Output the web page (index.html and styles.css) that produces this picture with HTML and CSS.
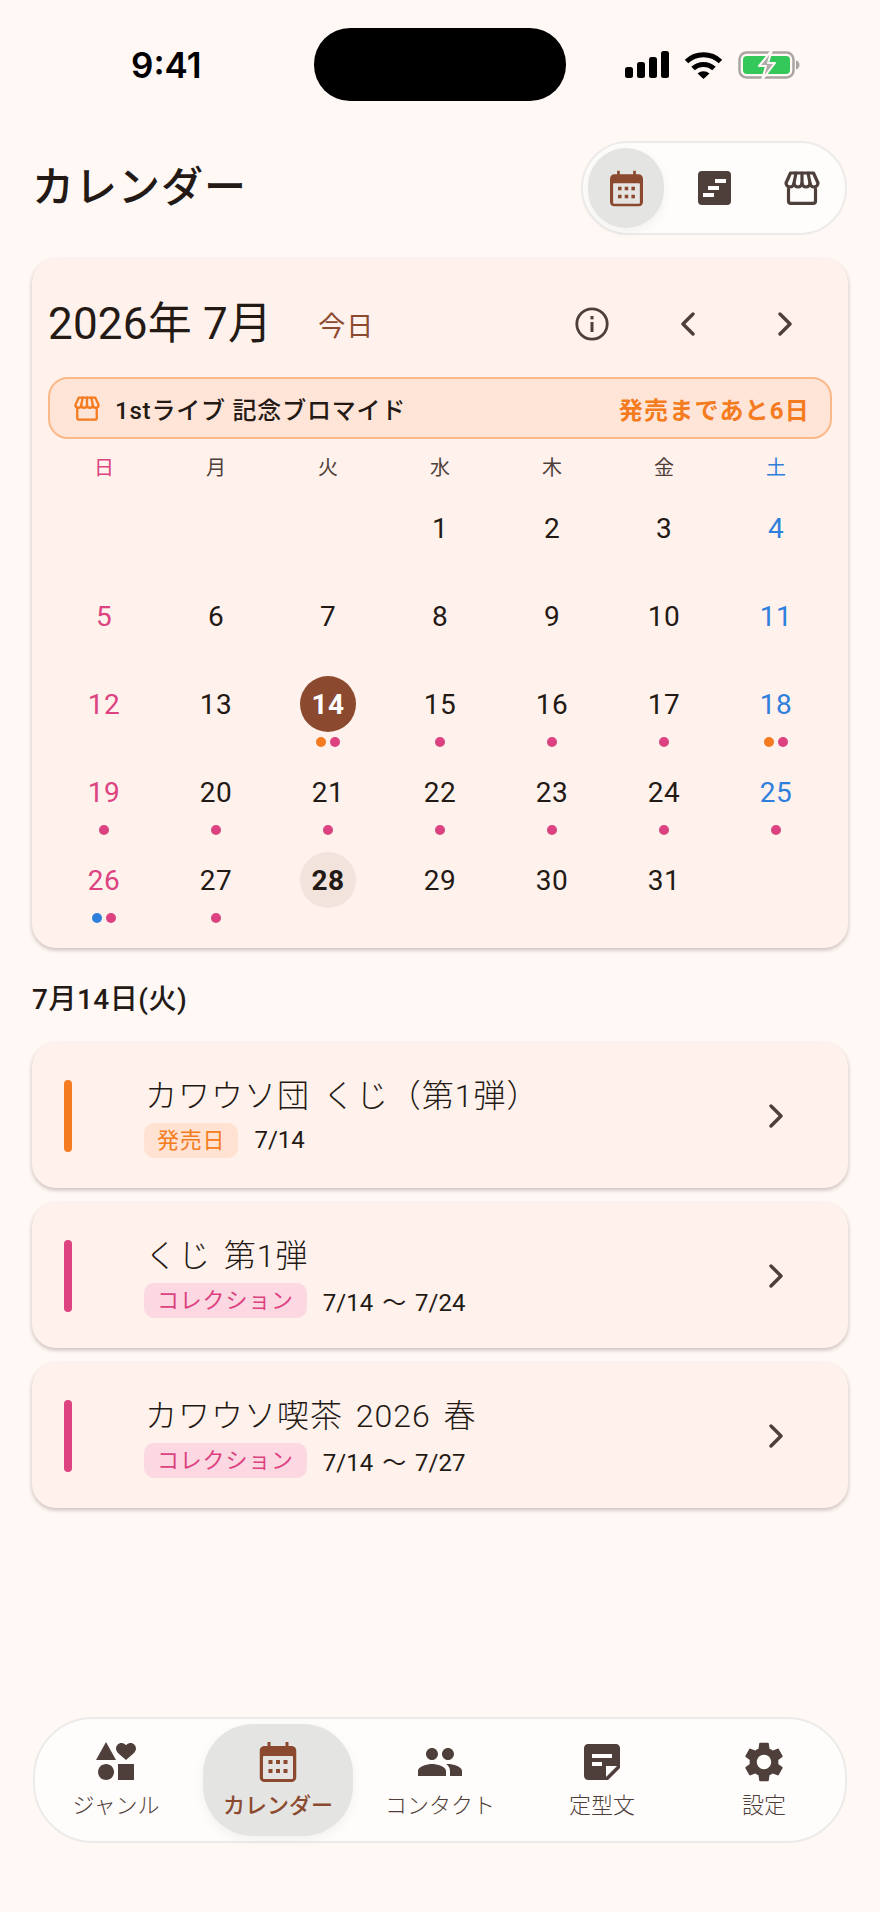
FILE: index.html
```html
<!DOCTYPE html>
<html lang="ja">
<head>
  <meta charset="UTF-8" />
  <meta name="viewport" content="width=device-width, initial-scale=1.0" />
  <title>カレンダー</title>
  <link rel="stylesheet" href="styles.css">
</head>
<body>
  <svg class="defs" width="0" height="0">
    <symbol id="cal" viewBox="0 0 37 40">
      <path fill="currentColor" d="M8 0h3v4h15V0h3v4h3c2.800 0 5 2.200 5 5v26c0 2.800-2.200 5-5 5H5c-2.800 0-5-2.200-5-5V9c0-2.800 2.200-5 5-5h3z"/>
      <rect x="3.500" y="14" width="30" height="23" rx="1" fill="#e6e4e2"/>
      <g fill="currentColor">
        <rect x="9" y="18" width="4" height="4"/><rect x="16.500" y="18" width="4" height="4"/><rect x="24" y="18" width="4" height="4"/>
        <rect x="9" y="27" width="4" height="4"/><rect x="16.500" y="27" width="4" height="4"/><rect x="24" y="27" width="4" height="4"/>
      </g>
    </symbol>
    <symbol id="store" viewBox="0 0 36 34">
      <g fill="none" stroke="currentColor" stroke-width="3.200" stroke-linejoin="round" stroke-linecap="round">
        <path d="M6.500 2h23L34 12a4 4 0 0 1-8 0 4 4 0 0 1-8 0 4 4 0 0 1-8 0 4 4 0 0 1-8 0z"/>
        <path d="M12 2l-2 10M18 2v10M24 2l2 10"/>
        <path d="M4.500 18v12c0 1.500.8 2.300 2.300 2.300h22.400c1.500 0 2.300-.8 2.300-2.300V18"/>
      </g>
    </symbol>
    <symbol id="chev-right" viewBox="0 0 16 24">
      <path d="M3 2l10 10-10 10" fill="none" stroke="currentColor" stroke-width="3.400" stroke-linecap="round" stroke-linejoin="round"/>
    </symbol>
    <symbol id="chev-left" viewBox="0 0 16 24">
      <path d="M13 2L3 12l10 10" fill="none" stroke="currentColor" stroke-width="3.400" stroke-linecap="round" stroke-linejoin="round"/>
    </symbol>
  </svg>

  <div class="page">
    <div class="status-bar">
      <div class="time">9:41</div>
      <div class="island"></div>
      <div class="status-icons">
        <svg width="44" height="27" viewBox="0 0 44 27">
          <rect x="0" y="16" width="8" height="11" rx="2.500"/>
          <rect x="12" y="11" width="8" height="16" rx="2.500"/>
          <rect x="24" y="6" width="8" height="21" rx="2.500"/>
          <rect x="36" y="0" width="8" height="27" rx="2.500"/>
        </svg>
        <svg width="39" height="28" viewBox="0 0 39 28">
          <path d="M2.500 10.500A25 25 0 0 1 36.500 10.500M9 17.500A15.500 15.500 0 0 1 30 17.500" fill="none" stroke="#000" stroke-width="5"/>
          <path d="M13.500 22.500A9 9 0 0 1 25.500 22.500L19.500 28z"/>
        </svg>
        <svg class="battery" width="62" height="28" viewBox="0 0 62 28">
          <rect x="1.500" y="1.500" width="54" height="25" rx="7" fill="none" stroke="#a8a5a2" stroke-width="2.500"/>
          <path d="M58 9.500c2 .5 3.500 2.300 3.500 4.500s-1.500 4-3.500 4.500z" fill="#a8a5a2"/>
          <rect x="5" y="5" width="47" height="18" rx="4" fill="#34c759"/>
          <path d="M34 -1L21 15h7l-4 14 13-17h-7z" fill="#b0aca8" stroke="#fff8f5" stroke-width="2" stroke-linejoin="round"/>
        </svg>
      </div>
    </div>

    <header class="top">
      <h1 class="title">カレンダー</h1>
      <div class="switch">
        <div class="switch-item active"><svg class="ic-brown" width="33" height="37"><use href="#cal"/></svg></div>
        <div class="switch-item">
          <svg width="33" height="34" viewBox="0 0 33 34">
            <rect width="33" height="34" rx="4" fill="#4f3f3a"/>
            <rect x="17" y="8" width="11" height="4" fill="#fffdfc"/>
            <rect x="10" y="15" width="11" height="4" fill="#fffdfc"/>
            <rect x="5" y="22" width="11" height="4" fill="#fffdfc"/>
          </svg>
        </div>
        <div class="switch-item"><svg class="ic-dark" width="36" height="34"><use href="#store"/></svg></div>
      </div>
    </header>

    <section class="cal-card">
      <div class="cal-head">
        <div class="month">2026年 7月</div>
        <div class="today">今日</div>
        <div class="cal-actions">
          <svg class="ic-dark" width="34" height="34" viewBox="0 0 34 34">
            <circle cx="17" cy="17" r="15.200" fill="none" stroke="currentColor" stroke-width="2.800"/>
            <rect x="15.500" y="15" width="3" height="10" fill="currentColor"/>
            <rect x="15.500" y="9" width="3" height="3.400" fill="currentColor"/>
          </svg>
          <svg class="ic-dark nav-left" width="16" height="24"><use href="#chev-left"/></svg>
          <svg class="ic-dark nav-right" width="16" height="24"><use href="#chev-right"/></svg>
        </div>
      </div>

      <div class="banner">
        <svg class="ic-orange" width="26" height="25"><use href="#store"/></svg>
        <span class="banner-name">1stライブ 記念ブロマイド</span>
        <span class="banner-left">発売まであと6日</span>
      </div>

      <div class="weekdays">
        <div class="sun">日</div><div>月</div><div>火</div><div>水</div><div>木</div><div>金</div><div class="sat">土</div>
      </div>

      <div class="days">
        <div class="day"></div>
        <div class="day"></div>
        <div class="day"></div>
        <div class="day"><span class="num">1</span></div>
        <div class="day"><span class="num">2</span></div>
        <div class="day"><span class="num">3</span></div>
        <div class="day sat"><span class="num">4</span></div>

        <div class="day sun"><span class="num">5</span></div>
        <div class="day"><span class="num">6</span></div>
        <div class="day"><span class="num">7</span></div>
        <div class="day"><span class="num">8</span></div>
        <div class="day"><span class="num">9</span></div>
        <div class="day"><span class="num">10</span></div>
        <div class="day sat"><span class="num">11</span></div>

        <div class="day sun"><span class="num">12</span></div>
        <div class="day"><span class="num">13</span></div>
        <div class="day selected"><span class="num">14</span><span class="dots"><i class="o"></i><i class="p"></i></span></div>
        <div class="day"><span class="num">15</span><span class="dots"><i class="p"></i></span></div>
        <div class="day"><span class="num">16</span><span class="dots"><i class="p"></i></span></div>
        <div class="day"><span class="num">17</span><span class="dots"><i class="p"></i></span></div>
        <div class="day sat"><span class="num">18</span><span class="dots"><i class="o"></i><i class="p"></i></span></div>

        <div class="day sun"><span class="num">19</span><span class="dots"><i class="p"></i></span></div>
        <div class="day"><span class="num">20</span><span class="dots"><i class="p"></i></span></div>
        <div class="day"><span class="num">21</span><span class="dots"><i class="p"></i></span></div>
        <div class="day"><span class="num">22</span><span class="dots"><i class="p"></i></span></div>
        <div class="day"><span class="num">23</span><span class="dots"><i class="p"></i></span></div>
        <div class="day"><span class="num">24</span><span class="dots"><i class="p"></i></span></div>
        <div class="day sat"><span class="num">25</span><span class="dots"><i class="p"></i></span></div>

        <div class="day sun"><span class="num">26</span><span class="dots"><i class="b"></i><i class="p"></i></span></div>
        <div class="day"><span class="num">27</span><span class="dots"><i class="p"></i></span></div>
        <div class="day current"><span class="num">28</span></div>
        <div class="day"><span class="num">29</span></div>
        <div class="day"><span class="num">30</span></div>
        <div class="day"><span class="num">31</span></div>
        <div class="day"></div>
      </div>
    </section>

    <h2 class="date-title">7月14日(火)</h2>

    <div class="events">
      <div class="event">
        <div class="bar bar-orange"></div>
        <div class="event-body">
          <div class="event-name">カワウソ団 くじ（第1弾）</div>
          <div class="event-meta"><span class="tag tag-orange">発売日</span><span class="range">7/14</span></div>
        </div>
        <svg class="ic-dark" width="16" height="24"><use href="#chev-right"/></svg>
      </div>
      <div class="event">
        <div class="bar bar-pink"></div>
        <div class="event-body">
          <div class="event-name">くじ 第1弾</div>
          <div class="event-meta"><span class="tag tag-pink">コレクション</span><span class="range">7/14 〜 7/24</span></div>
        </div>
        <svg class="ic-dark" width="16" height="24"><use href="#chev-right"/></svg>
      </div>
      <div class="event">
        <div class="bar bar-pink"></div>
        <div class="event-body">
          <div class="event-name">カワウソ喫茶 2026 春</div>
          <div class="event-meta"><span class="tag tag-pink">コレクション</span><span class="range">7/14 〜 7/27</span></div>
        </div>
        <svg class="ic-dark" width="16" height="24"><use href="#chev-right"/></svg>
      </div>
    </div>

    <nav class="tabs">
      <div class="tab">
        <svg width="48" height="48" viewBox="0 0 24 24" fill="#4f3f3a"><path d="M7.020 13c-2.210 0-4 1.790-4 4s1.790 4 4 4 4-1.790 4-4-1.790-4-4-4zM13 13v8h8v-8h-8zM7 2l-5 9h10L7 2zm12.250.5c-1.060 0-1.810.56-2.250 1.170-.44-.61-1.190-1.170-2.250-1.170C13.190 2.500 12 3.780 12 5.250c0 2 2.420 3.420 5 5.750 2.580-2.330 5-3.750 5-5.750 0-1.470-1.190-2.750-2.750-2.750z"/></svg>
        <span>ジャンル</span>
      </div>
      <div class="tab active">
        <svg class="ic-brown" width="48" height="48" viewBox="-5.500 -4 48 48"><use href="#cal" width="37" height="40"/></svg>
        <span>カレンダー</span>
      </div>
      <div class="tab">
        <svg width="48" height="48" viewBox="0 0 24 24" fill="#4f3f3a"><path d="M16 11c1.660 0 2.990-1.340 2.990-3S17.660 5 16 5c-1.660 0-3 1.340-3 3s1.340 3 3 3zm-8 0c1.660 0 2.990-1.340 2.990-3S9.660 5 8 5C6.340 5 5 6.340 5 8s1.340 3 3 3zm0 2c-2.330 0-7 1.170-7 3.500V19h14v-2.500c0-2.330-4.670-3.500-7-3.500zm8 0c-.29 0-.62.02-.97.05 1.160.84 1.970 1.970 1.970 3.450V19h6v-2.500c0-2.330-4.670-3.500-7-3.500z"/></svg>
        <span>コンタクト</span>
      </div>
      <div class="tab">
        <svg width="48" height="48" viewBox="0 0 24 24" fill="#4f3f3a"><path d="M19 3H4.990C3.890 3 3 3.900 3 5l.01 14c0 1.100.89 2 1.990 2h10l6-6V5c0-1.100-.9-2-2-2zM7 8h10v2H7V8zm5 6H7v-2h5v2zm2 5.500V14h5.500L14 19.500z"/></svg>
        <span>定型文</span>
      </div>
      <div class="tab">
        <svg width="48" height="48" viewBox="0 0 24 24" fill="#4f3f3a"><path d="M19.140 12.940c.04-.3.06-.61.06-.94 0-.32-.02-.64-.07-.94l2.030-1.580c.18-.14.23-.41.12-.61l-1.920-3.320c-.12-.22-.37-.29-.59-.22l-2.390.96c-.5-.38-1.030-.7-1.620-.94l-.36-2.540c-.04-.24-.24-.41-.48-.41h-3.840c-.24 0-.43.17-.47.41l-.36 2.540c-.59.24-1.130.57-1.620.94l-2.390-.96c-.22-.08-.47 0-.59.22L2.740 8.870c-.12.21-.08.47.12.61l2.030 1.580c-.05.3-.09.63-.09.94s.02.64.07.94l-2.030 1.580c-.18.14-.23.41-.12.61l1.920 3.320c.12.22.37.29.59.22l2.390-.96c.5.38 1.030.7 1.620.94l.36 2.540c.05.24.24.41.48.41h3.840c.24 0 .44-.17.47-.41l.36-2.540c.59-.24 1.130-.56 1.620-.94l2.390.96c.22.08.47 0 .59-.22l1.920-3.320c.12-.22.07-.47-.12-.61l-2.010-1.580zM12 15.600c-1.980 0-3.600-1.620-3.600-3.600s1.620-3.600 3.600-3.600 3.600 1.620 3.600 3.600-1.620 3.600-3.600 3.600z"/></svg>
        <span>設定</span>
      </div>
    </nav>
  </div>
</body>
</html>
```

FILE: styles.css
```css
* {
  box-sizing: border-box;
}
body {
  margin: 0;
  background-color: #fff8f5;
  color: #241a15;
  font-family: Roboto, "Noto Sans CJK JP", sans-serif;
}
.defs {
  position: absolute;
}
.ic-brown {
  color: #8b4a2f;
}
.ic-dark {
  color: #4f3f3a;
}
.ic-orange {
  color: #f47b20;
}
.page {
  height: 1912px;
  padding: 28px 32px 69px;
  display: flex;
  flex-direction: column;
  overflow: hidden;
}

/* status bar */
.status-bar {
  height: 73px;
  display: flex;
  align-items: center;
}
.time {
  width: 282px;
  padding-left: 99px;
  font-family: Inter, sans-serif;
  font-size: 35px;
  font-weight: 600;
  color: #000;
}
.island {
  width: 252px;
  height: 73px;
  border-radius: 36px;
  background: #000;
}
.status-icons {
  margin-left: 59px;
  display: flex;
  align-items: center;
  gap: 15px;
}
.battery {
  overflow: visible;
}

/* title row */
.top {
  margin-top: 40px;
  height: 94px;
  display: flex;
  align-items: center;
  justify-content: space-between;
}
.title {
  margin: 0;
  font-size: 42px;
  font-weight: 500;
  line-height: 1.2;
  letter-spacing: 1px;
}
.switch {
  width: 266px;
  height: 94px;
  margin-right: 1px;
  padding-left: 5px;
  display: flex;
  align-items: center;
  border: 2px solid #ecebe9;
  border-radius: 47px;
  background: #fffdfc;
}
.switch-item {
  flex: none;
  width: 88px;
  height: 80px;
  display: flex;
  align-items: center;
  justify-content: center;
}
.switch-item.active {
  width: 76px;
  margin-right: 6px;
  border-radius: 40px;
  background: #e4e4e3;
  box-shadow: 0 4px 12px rgba(0, 0, 0, .05);
}

/* calendar card */
.cal-card {
  margin-top: 24px;
  height: 689px;
  padding: 34px 16px 8px;
  border-radius: 24px;
  background: #fff1ec;
  box-shadow: 0 2px 4px rgba(60, 40, 30, .28);
}
.cal-head {
  height: 62px;
  display: flex;
  align-items: center;
}
.month {
  font-size: 44px;
  line-height: 1;
  letter-spacing: .2px;
}
.today {
  margin-left: 46px;
  font-size: 27px;
  letter-spacing: 1px;
  color: #8b4a2f;
}
.cal-actions {
  margin-left: auto;
  display: flex;
  align-items: center;
}
.nav-left {
  margin-left: 71px;
}
.nav-right {
  margin-left: 81px;
  margin-right: 39px;
}
.banner {
  margin-top: 22px;
  height: 62px;
  padding: 0 20px 0 24px;
  display: flex;
  align-items: center;
  border: 2px solid #fbb98a;
  border-radius: 20px;
  background: #ffe5d8;
}
.banner-name {
  margin-left: 15px;
  font-size: 24px;
  font-weight: 500;
  letter-spacing: .8px;
}
.banner-left {
  margin-left: auto;
  font-size: 24px;
  font-weight: 700;
  letter-spacing: 1.2px;
  color: #f47b20;
}
.weekdays {
  margin-top: 15px;
  height: 28px;
  display: grid;
  grid-template-columns: repeat(7, 1fr);
  font-size: 20px;
  line-height: 28px;
  text-align: center;
  color: #4f3f3a;
}
.days {
  margin-top: 18px;
  display: grid;
  grid-template-columns: repeat(7, 112px);
  grid-auto-rows: 88px;
}
.weekdays .sun,
.sun .num {
  color: #dc4380;
}
.weekdays .sat,
.sat .num {
  color: #2f7fdc;
}
.day {
  display: flex;
  flex-direction: column;
  align-items: center;
}
.num {
  width: 56px;
  height: 56px;
  display: flex;
  align-items: center;
  justify-content: center;
  border-radius: 50%;
  font-size: 28px;
  letter-spacing: .5px;
}
.selected .num {
  background: #8b4a2f;
  color: #fff;
  font-weight: 700;
}
.current .num {
  background: #f2e4dc;
  font-weight: 700;
}
.dots {
  margin-top: 5px;
  display: flex;
  gap: 4px;
}
.dots i {
  width: 10px;
  height: 10px;
  border-radius: 50%;
}
.dots .p {
  background: #dc4380;
}
.dots .o {
  background: #f47b20;
}
.dots .b {
  background: #2f7fdc;
}

/* selected day list */
.date-title {
  margin: 36px 0 0;
  font-size: 28px;
  line-height: 32px;
  font-weight: 500;
  letter-spacing: .5px;
}
.events {
  margin-top: 27px;
  display: flex;
  flex-direction: column;
  gap: 15px;
}
.event {
  height: 145px;
  padding: 0 64px 0 32px;
  display: flex;
  align-items: center;
  border-radius: 24px;
  background: #fff1ec;
  box-shadow: 0 2px 4px rgba(60, 40, 30, .28);
}
.bar {
  width: 8px;
  height: 72px;
  border-radius: 4px;
}
.bar-orange {
  background: #f47b20;
}
.bar-pink {
  background: #dc4380;
}
.event-body {
  margin-left: 72px;
  padding-top: 2px;
  flex: 1;
}
.event-name {
  margin-left: 1px;
  font-size: 32px;
  font-weight: 300;
  line-height: 40px;
  letter-spacing: 1px;
  word-spacing: 4px;
}
.event-meta {
  margin-top: 7px;
  display: flex;
  align-items: center;
}
.tag {
  height: 35px;
  padding: 0 13px;
  border-radius: 10px;
  font-size: 22px;
  line-height: 35px;
  letter-spacing: .8px;
}
.tag-orange {
  background: #ffe2d2;
  color: #f47b20;
}
.tag-pink {
  background: #fcd8e3;
  color: #dc4380;
}
.range {
  margin-left: 16px;
  font-size: 24px;
  word-spacing: 3px;
}

/* bottom tabs */
.tabs {
  margin: auto 1px 0;
  height: 126px;
  padding: 5px 0;
  display: grid;
  grid-template-columns: repeat(5, 1fr);
  border: 2px solid #ecebe9;
  border-radius: 60px;
  background: #fffdfc;
}
.tab {
  display: flex;
  flex-direction: column;
  align-items: center;
  padding-top: 14px;
  font-size: 22px;
  font-weight: 300;
  line-height: 30px;
  color: #4f3f3a;
}
.tab.active {
  width: 150px;
  justify-self: center;
  border-radius: 50px;
  background: #e4e4e3;
  box-shadow: 0 4px 12px rgba(0, 0, 0, .05);
  color: #8b4a2f;
  font-weight: 500;
}
.tab span {
  margin-top: 5px;
}
```
